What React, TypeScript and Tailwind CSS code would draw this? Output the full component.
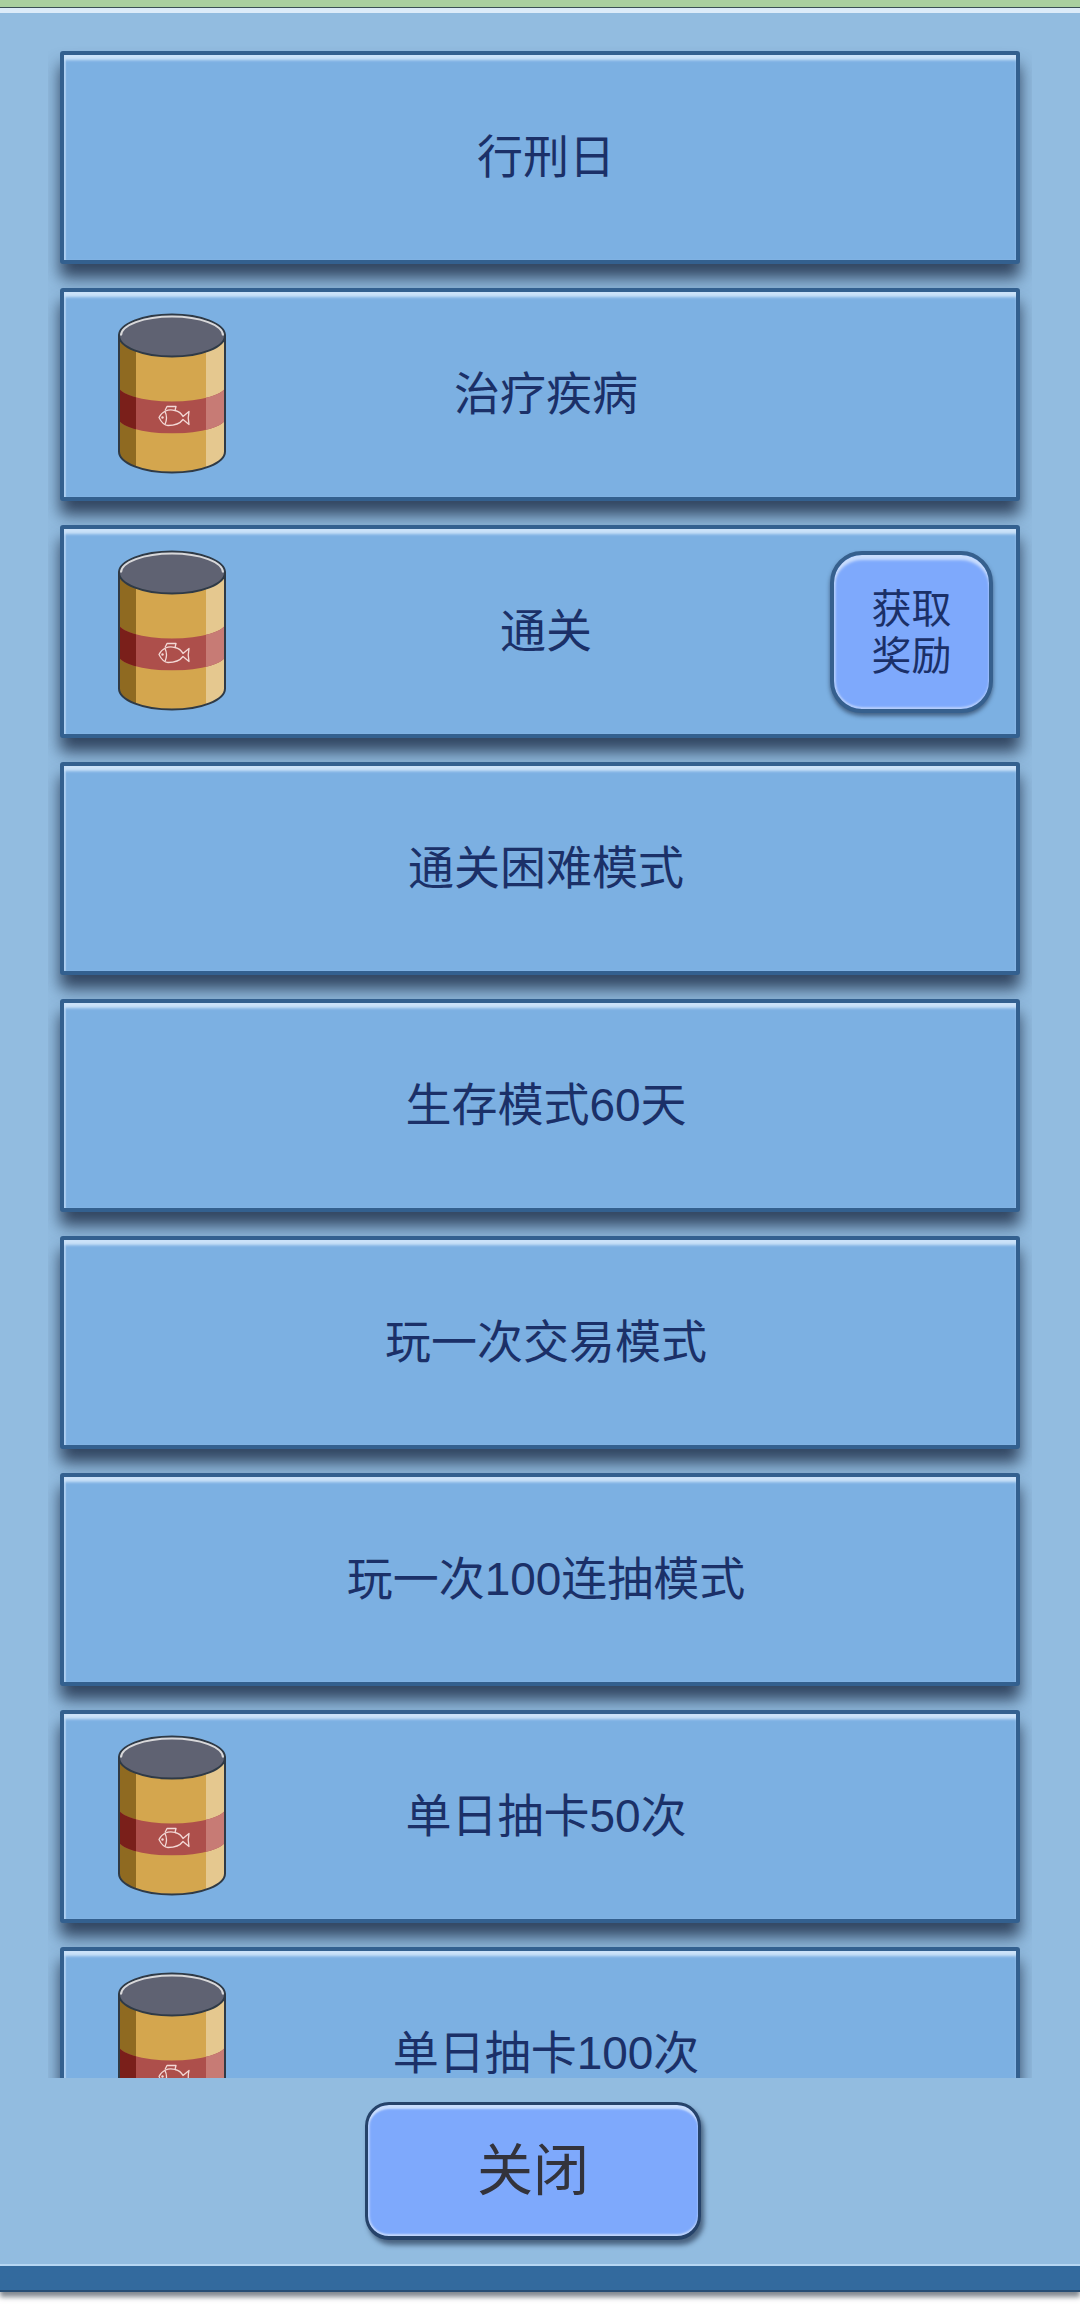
import { useId } from "react";

const rows = [
  { title: "行刑日" },
  { title: "治疗疾病", can: true },
  { title: "通关", can: true, claim: true },
  { title: "通关困难模式" },
  { title: "生存模式60天" },
  { title: "玩一次交易模式" },
  { title: "玩一次100连抽模式" },
  { title: "单日抽卡50次", can: true },
  { title: "单日抽卡100次", can: true },
];

function FishCan() {
  const clip = useId();
  const bandClip = useId();
  const body = "M1 22V138A53 21 0 0 0 107 138V22Z";
  return (
    <svg width="108" height="162" viewBox="0 -1.5 108 162" className="-mt-[3px] block">
      <clipPath id={clip}>
        <path d={body} />
      </clipPath>
      <clipPath id={bandClip}>
        <path d="M0 72A54 16 0 0 0 108 72V104A54 16 0 0 1 0 104Z" />
      </clipPath>
      <g clipPath={`url(#${clip})`}>
        <rect y="-2" width="108" height="164" fill="#d4a64e" />
        <rect y="-2" width="18" height="164" fill="#8f6a21" />
        <rect x="88" y="-2" width="20" height="164" fill="#e5c88f" />
        <g clipPath={`url(#${bandClip})`}>
          <rect y="60" width="108" height="70" fill="#ad4f4b" />
          <rect y="60" width="18" height="70" fill="#7a1f1a" />
          <rect x="88" y="60" width="20" height="70" fill="#c77b75" />
        </g>
      </g>
      <path d={body} fill="none" stroke="#2f3a46" strokeWidth="2" />
      <ellipse cx="54" cy="22" rx="53" ry="21" fill="#5f6272" stroke="#2f3a46" strokeWidth="2" />
      <path d="M3 22A51 19 0 0 1 105 22" fill="none" stroke="#d8d8da" strokeWidth="2" />
      <g fill="none" stroke="#f3d9d6" strokeWidth="1.3" strokeLinejoin="round">
        <path d="M41 104C44 98 50 95 57 97C61 98 64 101 65 103L71 98C70 102 70 106 71 111L65 106C62 110 57 112 50 112C46 112 43 108 41 104Z" />
        <path d="M47 97L49 93L58 93L57 97" />
        <path d="M47 98Q50 104 47 111" />
      </g>
      <circle cx="44.5" cy="104" r="1.2" fill="#f3d9d6" />
    </svg>
  );
}

function Row({ title, can, claim }: { title: string; can?: boolean; claim?: boolean }) {
  return (
    <div className="grid h-[213px] shrink-0 grid-cols-[194px_1fr_184px] items-center rounded-[3px] border-[4px] border-[#33608f] bg-[#7cb0e2] shadow-[0_14px_16px_rgba(25,40,65,0.8),inset_0_6px_3px_-1px_#cbe2f9,inset_2px_0_1px_0_#a9cdf0]">
      <div className="pl-[54px]">{can && <FishCan />}</div>
      <div className="pb-[2px] pl-[2px] text-center text-[46px] leading-none text-[#1b3068]">{title}</div>
      <div>
        {claim && (
          <button className="-ml-[2px] flex h-[162px] w-[163px] items-center justify-center rounded-[32px] border-[4px] border-[#36608e] bg-[#7ea9fc] pt-[2px] text-[40px] leading-[47px] text-[#1b3068] shadow-[0_3px_4px_rgba(30,45,70,0.6),inset_0_6px_3px_-1px_#c9ddfd,inset_0_-2px_2px_0_#b5cdfb,inset_2px_0_2px_0_#aac6fc]">
            获取
            <br />
            奖励
          </button>
        )}
      </div>
    </div>
  );
}

export default function App() {
  return (
    <div className="flex h-[2310px] w-[1080px] flex-col overflow-hidden bg-white font-['Liberation_Sans','Noto_Sans_CJK_SC',sans-serif]">
      <div className="h-[8px] shrink-0 border-b-[1px] border-[#3a4f55] bg-[#a9cf9f]" />
      <div className="h-[5px] shrink-0 bg-[#dcebf9]" />
      <div className="flex min-h-0 flex-1 flex-col bg-[#92bce0]">
        <div className="mx-[48px] flex min-h-0 flex-1 flex-col gap-[24px] overflow-hidden px-[12px] pt-[38px]">
          {rows.map((row) => (
            <Row key={row.title} {...row} />
          ))}
        </div>
        <div className="flex h-[186px] shrink-0 justify-center pt-[24px]">
          <button className="mr-[14px] h-[138px] w-[336px] rounded-[24px] border-b-[4px] border-l-[3px] border-r-[3px] border-t-[3px] border-[#26436a] bg-[#7ea9fc] text-[56px] text-[#33333b] shadow-[3px_5px_5px_rgba(25,40,65,0.6),inset_0_5px_2px_-1px_#c9ddfd,inset_0_-2px_2px_0_#c3d7fb,inset_2px_0_2px_0_#aac6fc]">
            关闭
          </button>
        </div>
      </div>
      <div className="h-[2px] shrink-0 bg-[#b8d8f4]" />
      <div className="h-[26px] shrink-0 border-b-[2px] border-[#274d74] bg-[#336a9e] shadow-[0_5px_5px_rgba(30,40,55,0.55)]" />
      <div className="h-[18px] shrink-0" />
    </div>
  );
}
